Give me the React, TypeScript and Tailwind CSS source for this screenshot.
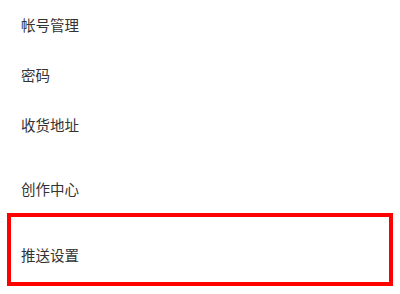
const accountItems = ['帐号管理', '密码', '收货地址'];

export default function App() {
  return (
    <div
      className="w-[400px] h-[294px] bg-white text-[#333333] text-[14.5px] overflow-hidden"
      style={{ fontFamily: '"Noto Sans CJK SC", "Liberation Sans", sans-serif' }}
    >
      {accountItems.map((item) => (
        <div key={item} className="h-[50px] flex items-center px-[21px]">
          {item}
        </div>
      ))}
      <div className="mt-[15px] h-[48px] flex items-center px-[21px]">创作中心</div>
      <div className="mx-[7px] h-[73px] border-4 border-[#ff0000] flex items-center pl-[10px] pt-[10px]">
        推送设置
      </div>
    </div>
  );
}
